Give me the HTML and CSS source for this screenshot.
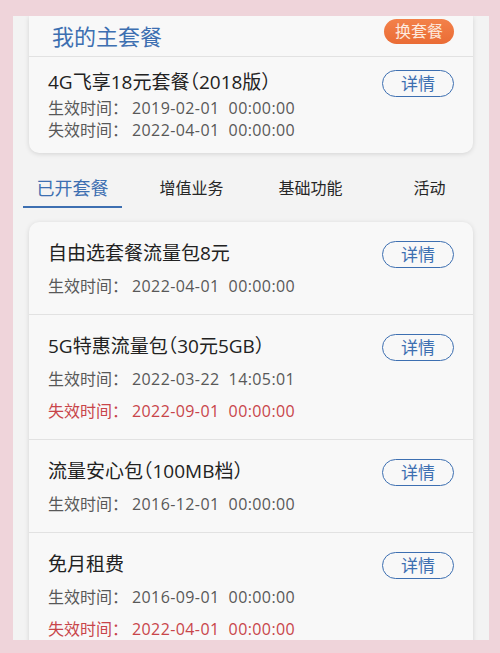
FILE: index.html
```html
<!DOCTYPE html>
<html lang="zh-CN">
<head>
<meta charset="utf-8">
<title>我的主套餐</title>
<link rel="stylesheet" href="styles.css">
</head>
<body>
<div class="panel">
  <section class="main-card">
    <div class="main-head">
      <h1 class="main-title">我的主套餐</h1>
      <button class="btn-change">换套餐</button>
    </div>
    <div class="main-body">
      <div class="info">
        <div class="item-title">4G飞享18元套餐（2018版）</div>
        <div class="date tight first"><span class="label">生效时间：</span><span class="num">2019-02-01&nbsp;&nbsp;00:00:00</span></div>
        <div class="date tight"><span class="label">失效时间：</span><span class="num">2022-04-01&nbsp;&nbsp;00:00:00</span></div>
      </div>
      <button class="btn-detail">详情</button>
    </div>
  </section>

  <nav class="tabs">
    <div class="tab active">已开套餐</div>
    <div class="tab">增值业务</div>
    <div class="tab">基础功能</div>
    <div class="tab">活动</div>
  </nav>

  <section class="list-card">
    <div class="row">
      <div class="info">
        <div class="item-title">自由选套餐流量包8元</div>
        <div class="date first"><span class="label">生效时间：</span><span class="num">2022-04-01&nbsp;&nbsp;00:00:00</span></div>
      </div>
      <button class="btn-detail">详情</button>
    </div>
    <div class="row">
      <div class="info">
        <div class="item-title">5G特惠流量包（30元5GB）</div>
        <div class="date first"><span class="label">生效时间：</span><span class="num">2022-03-22&nbsp;&nbsp;14:05:01</span></div>
        <div class="date expire"><span class="label">失效时间：</span><span class="num">2022-09-01&nbsp;&nbsp;00:00:00</span></div>
      </div>
      <button class="btn-detail">详情</button>
    </div>
    <div class="row">
      <div class="info">
        <div class="item-title">流量安心包（100MB档）</div>
        <div class="date first"><span class="label">生效时间：</span><span class="num">2016-12-01&nbsp;&nbsp;00:00:00</span></div>
      </div>
      <button class="btn-detail">详情</button>
    </div>
    <div class="row">
      <div class="info">
        <div class="item-title">免月租费</div>
        <div class="date first"><span class="label">生效时间：</span><span class="num">2016-09-01&nbsp;&nbsp;00:00:00</span></div>
        <div class="date expire"><span class="label">失效时间：</span><span class="num">2022-04-01&nbsp;&nbsp;00:00:00</span></div>
      </div>
      <button class="btn-detail">详情</button>
    </div>
  </section>
</div>
</body>
</html>
```

FILE: styles.css
```css
* { box-sizing: border-box; }

html, body {
  margin: 0;
  padding: 0;
}

body {
  width: 500px;
  height: 653px;
  overflow: hidden;
  background: #efd4da;
  padding: 16px 11px 13px 13px;
  font-family: "Open Sans", "Noto Sans CJK SC", sans-serif;
  color: #222;
}

.panel {
  height: 624px;
  background: #f3f3f3;
  overflow: hidden;
  padding: 0 16px;
}

.main-card {
  background: #f8f8f8;
  border-radius: 0 0 10px 10px;
  box-shadow: 0 1px 5px rgba(0, 0, 0, 0.13);
}

.main-head {
  height: 41px;
  display: flex;
  justify-content: space-between;
  align-items: flex-start;
  padding: 0 19px 0 23px;
  border-bottom: 1px solid #e2e2e2;
}

.main-title {
  margin: 6px 0 0;
  font-size: 22px;
  line-height: 28px;
  font-weight: 400;
  color: #3d6fb1;
}

.btn-change {
  margin-top: 3px;
  width: 70px;
  height: 25px;
  border: none;
  border-radius: 13px;
  background: linear-gradient(#f3814a, #ea6c35);
  color: #fde9de;
  font-family: inherit;
  font-size: 16px;
  line-height: 25px;
  padding: 0;
}

.main-body {
  display: flex;
  justify-content: space-between;
  align-items: flex-start;
  padding: 12px 19px 12px 19px;
}

.info { display: flex; flex-direction: column; }

.item-title {
  font-size: 19px;
  line-height: 26px;
  color: #222;
  font-feature-settings: "halt";
}

.date {
  font-size: 16px;
  line-height: 32px;
  color: #585858;
  white-space: nowrap;
}

.date .label { margin-right: 4px; }
.date .num { letter-spacing: 0.4px; }

.date.first { margin-top: 4px; }

.date.tight { line-height: 22px; }
.date.tight.first { margin-top: 2px; }

.date.expire { color: #c8454a; }

.btn-detail {
  margin-top: 1px;
  width: 72px;
  height: 27px;
  border: 1.5px solid #3d6fb1;
  border-radius: 14px;
  background: transparent;
  color: #3d6fb1;
  font-family: inherit;
  font-size: 17px;
  line-height: 24px;
  padding: 0;
}

.tabs {
  display: grid;
  grid-template-columns: repeat(4, 1fr);
  margin: 0 -16px;
  padding-top: 22px;
  height: 69px;
}

.tab {
  text-align: center;
  font-size: 16px;
  line-height: 26px;
  color: #262626;
}

.tab.active {
  color: #3d6fb1;
  font-size: 18px;
  margin: 0 10px;
  height: 33px;
  border-bottom: 2px solid #3d6fb1;
}

.list-card {
  background: #f8f8f8;
  border-radius: 10px;
  box-shadow: 0 1px 5px rgba(0, 0, 0, 0.13);
}

.row {
  display: flex;
  justify-content: space-between;
  align-items: flex-start;
  padding: 18px 19px 12px 19px;
  border-bottom: 1px solid #e2e2e2;
}
```
